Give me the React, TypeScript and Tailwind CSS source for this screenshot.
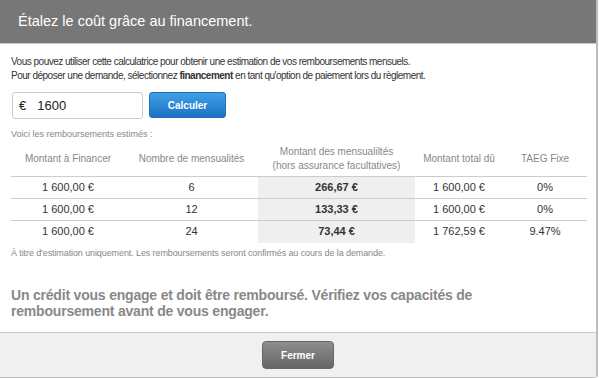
const rows = [
  { amount: '1 600,00 €', count: '6', monthly: '266,67 €', total: '1 600,00 €', taeg: '0%' },
  { amount: '1 600,00 €', count: '12', monthly: '133,33 €', total: '1 600,00 €', taeg: '0%' },
  { amount: '1 600,00 €', count: '24', monthly: '73,44 €', total: '1 762,59 €', taeg: '9.47%' },
];

const cols = 'grid grid-cols-[114px_133px_157px_88px_84px]';

function App() {
  return (
    <div className="w-[599px] h-[378px] bg-white font-['Liberation_Sans',Arial,sans-serif]">
      <div className="w-[598px] h-[378px] flex flex-col border-r-2 border-[#bdbdbd] rounded-br-[4px] overflow-hidden">
        <div className="h-[44px] bg-[#777777] border-b border-[#c8c8c8] flex items-center pl-[18px] text-white text-[14.5px] shrink-0">
          Étalez le coût grâce au financement.
        </div>

        <div className="flex-1 px-[11px] pt-[11px]">
          <p className="text-[10px] leading-[14px] tracking-[-0.5px] text-[#333]">
            Vous pouvez utiliser cette calculatrice pour obtenir une estimation de vos remboursements mensuels.
            <br />
            Pour déposer une demande, sélectionnez <b>financement</b> en tant qu'option de paiement lors du règlement.
          </p>

          <div className="flex gap-[6px] mt-[9px] ml-[1px]">
            <div className="w-[131px] h-[27px] border border-[#cccccc] rounded-[3px] flex items-center pl-[6px] text-[13px] text-[#222]">
              <span>€</span>
              <span className="ml-[11px]">1600</span>
            </div>
            <button className="w-[77px] h-[26px] rounded-[3px] border border-[#1f6fb8] bg-gradient-to-b from-[#3fa0e8] to-[#1c72c4] text-white text-[10px] font-bold">
              Calculer
            </button>
          </div>

          <div className="mt-[9px] text-[9px] text-[#888]">Voici les remboursements estimés :</div>

          <div className="w-[576px] text-center">
            <div className={`${cols} h-[35px] items-center text-[10px] text-[#888] border-b border-[#cccccc]`}>
              <div>Montant à Financer</div>
              <div>Nombre de mensualités</div>
              <div className="leading-[14px]">
                Montant des mensualiltés
                <br />
                (hors assurance facultatives)
              </div>
              <div>Montant total dû</div>
              <div>TAEG Fixe</div>
            </div>
            {rows.map((r, i) => (
              <div
                key={i}
                className={`${cols} h-[22px] text-[11px] text-[#333] ${i < 2 ? 'border-b border-[#cccccc]' : ''}`}
              >
                <div className="flex items-center justify-center">{r.amount}</div>
                <div className="flex items-center justify-center">{r.count}</div>
                <div className="flex items-center justify-center bg-[#efefef] font-bold">{r.monthly}</div>
                <div className="flex items-center justify-center">{r.total}</div>
                <div className="flex items-center justify-center">{r.taeg}</div>
              </div>
            ))}
          </div>

          <div className="mt-[4px] text-[9px] tracking-[-0.1px] text-[#888]">
            À titre d'estimation uniquement. Les remboursements seront confirmés au cours de la demande.
          </div>

          <p className="mt-[27px] text-[14px] leading-[16px] tracking-[-0.2px] font-bold text-[#888] w-[500px]">
            Un crédit vous engage et doit être remboursé. Vérifiez vos capacités de remboursement avant de vous engager.
          </p>
        </div>

        <div className="h-[46px] shrink-0 bg-[#f0f0f0] border-t border-[#c8c8c8] border-b border-b-[#bdbdbd] flex justify-center pt-[8px]">
          <button className="w-[72px] h-[28px] rounded-[4px] border border-[#666] bg-gradient-to-b from-[#8e8e8e] to-[#666] text-white text-[10px] font-bold">
            Fermer
          </button>
        </div>
      </div>
    </div>
  );
}

export default App;
